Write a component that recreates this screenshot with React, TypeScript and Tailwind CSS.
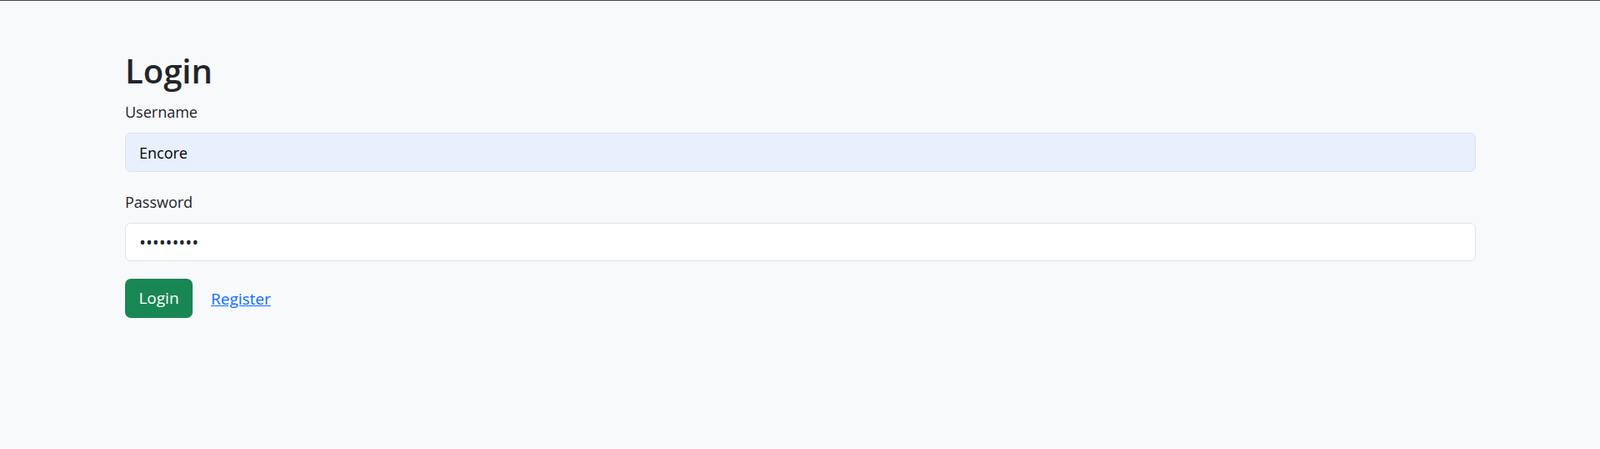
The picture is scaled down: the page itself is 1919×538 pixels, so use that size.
export default function App() {
  return (
    <div className="min-h-[538px] bg-[#f8f9fa] border-t border-[#41464b] font-['Open_Sans','Noto_Sans',sans-serif] text-[#212529]">
      <div className="pl-[150px] pr-[149px] pt-[60px]">
        <h2 className="text-[40px] font-semibold leading-[48px] mb-[10px]">Login</h2>
        <form onSubmit={(e) => e.preventDefault()}>
          <div className="mb-[21px]">
            <label htmlFor="username" className="block text-[18px] leading-[30px] mb-[10px]">
              Username
            </label>
            <input
              id="username"
              type="text"
              defaultValue="Encore"
              className="block w-full h-[47px] rounded-[7px] border border-[#dee2e6] bg-[#e8f0fe] px-[16px] text-[18px] text-black outline-none"
            />
          </div>
          <div className="mb-[21px]">
            <label htmlFor="password" className="block text-[18px] leading-[30px] mb-[10px]">
              Password
            </label>
            <input
              id="password"
              type="password"
              defaultValue="encore123"
              className="block w-full h-[46px] rounded-[7px] border border-[#dee2e6] bg-white px-[16px] text-[21px] text-[#212529] outline-none"
            />
          </div>
          <div className="flex items-center gap-[22px]">
            <button
              type="submit"
              className="h-[47px] w-[81px] rounded-[7px] bg-[#198754] text-white text-[19px]"
            >
              Login
            </button>
            <a href="#" className="text-[19px] text-[#0d6efd] underline pt-[2px]">
              Register
            </a>
          </div>
        </form>
      </div>
    </div>
  );
}
